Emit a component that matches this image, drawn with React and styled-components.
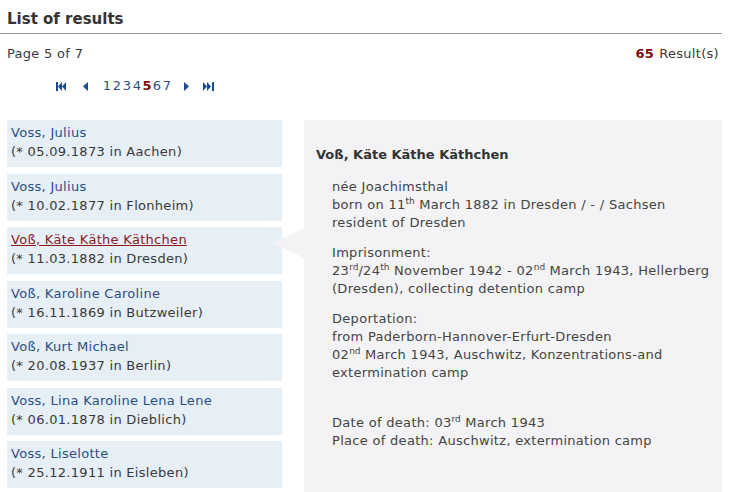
import React from 'react';
import styled, { createGlobalStyle } from 'styled-components';

const GlobalStyle = createGlobalStyle`
    body {
        margin: 0;
        background: #fff;
        font-family: "DejaVu Sans", Verdana, sans-serif;
        font-size: 13px;
        letter-spacing: 0.3px;
        color: #3a3a3a;
    }
`;

const Page = styled.div`
    width: 722px;
`;

const Title = styled.h2`
    margin: 0;
    padding: 9px 0 4px 7px;
    font-size: 15px;
    line-height: 20px;
    font-weight: bold;
    letter-spacing: 0;
    color: #333;
    border-bottom: 1px solid #9a9a9a;
`;

const InfoRow = styled.div`
    display: flex;
    justify-content: space-between;
    margin-top: 11px;
    padding: 0 3px 0 7px;
    line-height: 18px;
`;

const Count = styled.strong`
    color: #7d0f12;
    margin-right: 5px;
`;

const Pager = styled.div`
    display: flex;
    align-items: center;
    margin-top: 14px;
    padding-left: 56px;
    height: 18px;
    line-height: 18px;
`;

const PagerIcon = styled.svg`
    display: block;
    margin-right: ${p => p.$gap}px;
    fill: #1e4a8c;
`;

const PageNum = styled.a`
    width: 10px;
    text-align: center;
    letter-spacing: 0;
    color: ${p => (p.$current ? '#7d0f12' : '#2c4f82')};
    font-weight: ${p => (p.$current ? 'bold' : 'normal')};
    text-decoration: none;
    cursor: pointer;
`;

const Numbers = styled.div`
    display: flex;
    margin-right: 12px;
`;

const Main = styled.div`
    display: flex;
    align-items: flex-start;
    margin-top: 25px;
    padding-left: 7px;
    gap: 22px;
`;

const List = styled.ul`
    list-style: none;
    margin: 0;
    padding: 0;
    width: 275px;
    flex-shrink: 0;
    display: flex;
    flex-direction: column;
    gap: 6.5px;
`;

const Item = styled.li`
    background: #e6eef6;
    height: 47px;
    padding: 3px 0 0 4px;
    box-sizing: border-box;
    line-height: 19px;
`;

const Name = styled.a`
    display: block;
    color: ${p => (p.$active ? '#8a1a1e' : '#2c4f82')};
    text-decoration: ${p => (p.$active ? 'underline' : 'none')};
    cursor: pointer;
`;

const Born = styled.div`
    color: #3a3a3a;
`;

const Detail = styled.div`
    position: relative;
    flex: 1;
    box-sizing: border-box;
    background: #f3f3f5;
    min-height: 372px;
    padding: 26px 0 0 12px;
    line-height: 18px;
    color: #444;
`;

const Pointer = styled.div`
    position: absolute;
    left: -31px;
    top: 108px;
    width: 0;
    height: 0;
    border-top: 15px solid transparent;
    border-bottom: 15px solid transparent;
    border-right: 31px solid #f3f3f5;
`;

const DetailName = styled.h3`
    margin: 0 0 14px;
    font-size: 13px;
    line-height: 18px;
    font-weight: bold;
    letter-spacing: 0;
    color: #333;
`;

const Block = styled.p`
    margin: ${p => p.$spaced ? '32px' : '0'} 0 12px 16px;
`;

const Sup = styled.sup`
    font-size: 9px;
    letter-spacing: 0;
    line-height: 0;
`;

const people = [
    { name: 'Voss, Julius', born: '(* 05.09.1873 in Aachen)' },
    { name: 'Voss, Julius', born: '(* 10.02.1877 in Flonheim)' },
    { name: 'Voß, Käte Käthe Käthchen', born: '(* 11.03.1882 in Dresden)', active: true },
    { name: 'Voß, Karoline Caroline', born: '(* 16.11.1869 in Butzweiler)' },
    { name: 'Voß, Kurt Michael', born: '(* 20.08.1937 in Berlin)' },
    { name: 'Voss, Lina Karoline Lena Lene', born: '(* 06.01.1878 in Dieblich)' },
    { name: 'Voss, Liselotte', born: '(* 25.12.1911 in Eisleben)' },
];

export default function App() {
    return (
        <Page>
            <GlobalStyle />
            <Title>List of results</Title>
            <InfoRow>
                <span>Page 5 of 7</span>
                <span><Count>65</Count>Result(s)</span>
            </InfoRow>
            <Pager>
                <PagerIcon width="10" height="9" viewBox="0 0 10 9" $gap={17}>
                    <rect x="0" y="0" width="2" height="9" />
                    <path d="M6 0 L2 4.5 L6 9 Z M10 0 L6 4.5 L10 9 Z" />
                </PagerIcon>
                <PagerIcon width="5" height="9" viewBox="0 0 5 9" $gap={14}>
                    <path d="M5 0 L0 4.5 L5 9 Z" />
                </PagerIcon>
                <Numbers>
                    {[1, 2, 3, 4, 5, 6, 7].map(n => (
                        <PageNum key={n} $current={n === 5}>{n}</PageNum>
                    ))}
                </Numbers>
                <PagerIcon width="5" height="9" viewBox="0 0 5 9" $gap={14}>
                    <path d="M0 0 L5 4.5 L0 9 Z" />
                </PagerIcon>
                <PagerIcon width="11" height="9" viewBox="0 0 11 9" $gap={0}>
                    <path d="M0 0 L4 4.5 L0 9 Z M4 0 L8 4.5 L4 9 Z" />
                    <rect x="9" y="0" width="2" height="9" />
                </PagerIcon>
            </Pager>
            <Main>
                <List>
                    {people.map((p, i) => (
                        <Item key={i}>
                            <Name $active={p.active}>{p.name}</Name>
                            <Born>{p.born}</Born>
                        </Item>
                    ))}
                </List>
                <Detail>
                    <Pointer />
                    <DetailName>Voß, Käte Käthe Käthchen</DetailName>
                    <Block>
                        née Joachimsthal<br />
                        born on 11<Sup>th</Sup> March 1882 in Dresden / - / Sachsen<br />
                        resident of Dresden
                    </Block>
                    <Block>
                        Imprisonment:<br />
                        23<Sup>rd</Sup>/24<Sup>th</Sup> November 1942 - 02<Sup>nd</Sup> March 1943, Hellerberg (Dresden), collecting detention camp
                    </Block>
                    <Block>
                        Deportation:<br />
                        from Paderborn-Hannover-Erfurt-Dresden<br />
                        02<Sup>nd</Sup> March 1943, Auschwitz, Konzentrations-and extermination camp
                    </Block>
                    <Block $spaced>
                        Date of death: 03<Sup>rd</Sup> March 1943<br />
                        Place of death: Auschwitz, extermination camp
                    </Block>
                </Detail>
            </Main>
        </Page>
    );
}
